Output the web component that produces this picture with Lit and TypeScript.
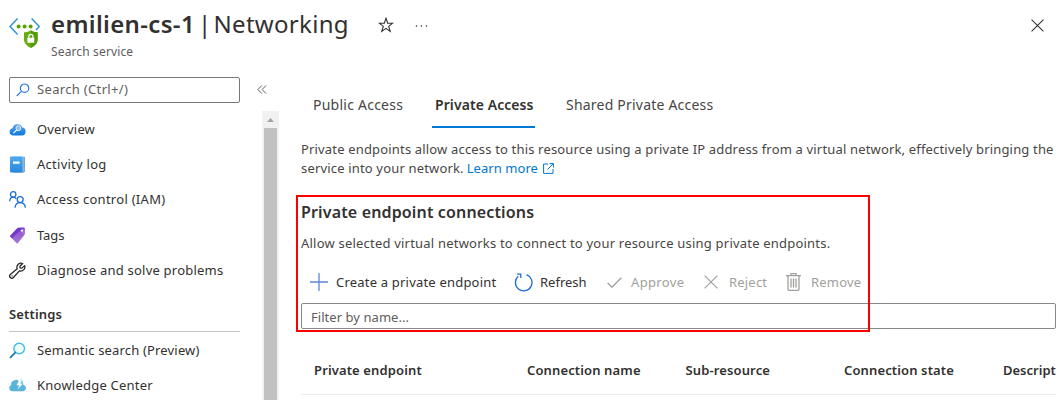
import { LitElement, html, css, svg, TemplateResult } from "lit";
import { customElement } from "lit/decorators.js";

const icon = (w: number, h: number, vb: string, body: unknown) =>
  html`<svg width=${w} height=${h} viewBox=${vb} fill="none">${body}</svg>`;

const service = icon(31, 31, "0 0 31 31", svg`
  <path d="M8.600 .6 1 8.500l7.600 7.900" stroke="#2f94d3" stroke-width="1.500"/>
  <path d="m22.600 .6 7.700 7.900-3.300 3.400" stroke="#2f94d3" stroke-width="1.500"/>
  <circle cx="9.600" cy="8.500" r="2" fill="#57a300"/><circle cx="15.600" cy="8.500" r="2" fill="#57a300"/><circle cx="21.600" cy="8.500" r="2" fill="#57a300"/>
  <path d="M21.800 12.200c2 1.600 4.200 2 6.800 2v7.300c0 4.500-3.800 6.900-6.800 8.500-3-1.600-6.800-4-6.800-8.500v-7.300c2.600 0 4.800-.4 6.800-2Z" fill="#66ad14"/>
  <path d="M21.800 12.200c2 1.600 4.200 2 6.800 2v7.300c0 4.500-3.800 6.900-6.800 8.500Z" fill="#549b06"/>
  <path d="M19.800 20v-1.500a2.050 2.200 0 0 1 4.100 0v1.500" stroke="#fff" stroke-width="1.200"/>
  <rect x="18.400" y="19.800" width="6.900" height="5" rx=".5" fill="#fff"/>`);

const star = icon(16, 16, "0 0 16 16", svg`<path d="m8 1.300 1.700 4.900h5l-4 3.200 1.500 5L8 11.400l-4.200 3 1.500-5-4-3.200h5Z" stroke="#323130" stroke-width="1.100"/>`);
const dots = icon(14, 4, "0 0 14 4", svg`<g fill="#323130"><circle cx="1.500" cy="2" r=".8"/><circle cx="6.500" cy="2" r=".8"/><circle cx="11.500" cy="2" r=".8"/></g>`);
const cross = (s: number, c: string) => icon(s, s, "0 0 14 14", svg`<path d="m.6.6 12.800 12.800M13.400.6.6 13.400" stroke=${c} stroke-width="1.150"/>`);
const magnifier = icon(14, 14, "0 0 14 14", svg`<g stroke="#2b7cd3" stroke-width="1.200"><circle cx="8.600" cy="5.200" r="4.200"/><path d="M5.600 8.200.8 13"/></g>`);
const chevrons = icon(10, 9, "0 0 10 9", svg`<path d="M4.800.5.9 4.500l3.900 4M9 .5 5.100 4.500l3.900 4" stroke="#605e5c"/>`);

const overview = icon(17, 17, "0 0 17 17", svg`
  <defs><linearGradient id="a" x2="0" y2="1"><stop stop-color="#55a4ee"/><stop offset="1" stop-color="#0f78d8"/></linearGradient></defs>
  <path d="M4 14.500A3.700 3.700 0 0 1 3.500 7.200 5.200 5.200 0 0 1 13.400 6.600 4 4 0 0 1 13 14.500Z" fill="url(#a)"/>
  <circle cx="9.400" cy="7.200" r="2.400" fill="#83b9f9" stroke="#e8f2fd" stroke-width="1"/><path d="m7.700 9-3 2.900" stroke="#e8f2fd" stroke-width="1.300" stroke-linecap="round"/>`);
const log = icon(17, 17, "0 0 17 17", svg`
  <defs><linearGradient id="b" x2="0" y2="1"><stop stop-color="#50aaf0"/><stop offset="1" stop-color="#2688dd"/></linearGradient></defs>
  <rect x="2.500" y=".5" width="13" height="15" rx=".8" fill="#a5c9e8"/><path d="M15.200 1v15M4 16h11" stroke="#4a7fae" stroke-width=".9"/>
  <rect x="1" y=".5" width="12.600" height="16" rx=".8" fill="url(#b)"/><rect x="4" y="5.400" width="6.600" height="2.400" rx=".4" fill="#fff"/>`);
const people = icon(17, 17, "0 0 17 17", svg`<g stroke="#1a6fd8" stroke-width="1.300">
  <circle cx="4.200" cy="3.400" r="2.700"/><path d="M.6 10.400c.2-2.600 1.500-4.200 3.600-4.200 1.300 0 2.400.6 3 1.600"/>
  <circle cx="11.200" cy="8.600" r="3"/><path d="M6 16.800c.3-3.200 2.200-5.100 5.200-5.100s4.900 1.900 5.200 5.100"/></g>`);
const tag = icon(17, 17, "0 0 17 17", svg`
  <defs><linearGradient id="c" x2="0" y2="1"><stop stop-color="#8a49d0"/><stop offset="1" stop-color="#a97ad8"/></linearGradient></defs>
  <path d="M9.500.7 14.800.6q1 0 1.100 1l-.1 5.200q0 .6-.5 1.100L8.800 16.200q-.6.600-1.200 0L1.400 9.800q-.5-.7.100-1.300L8.300 1.300Q8.800.7 9.500.7Z" fill="url(#c)"/>
  <path d="M9.500.7h5L2.800 11.200 1.400 9.800q-.5-.7.100-1.300L8.300 1.300Q8.800.7 9.500.7Z" fill="#7439c8"/>
  <circle cx="13" cy="3.600" r="1.200" fill="#fff"/><path d="m13.600 3.800.5 2.600" stroke="#d7bff0" stroke-width=".7"/>`);
const wrench = icon(17, 17, "0 0 17 17", svg`<path d="M13.700 1.500A4.100 4.100 0 0 0 8.200 6.700L1.300 12.500A2.100 2.100 0 0 0 4.400 15.500L10.400 8.900A4.200 4.200 0 0 0 15.700 3.600L12.900 6.100 11.100 5.900 10.900 4.200Z" stroke="#262626" stroke-width="1.250" stroke-linejoin="round"/><circle cx="3.100" cy="13.900" r=".6" fill="#262626"/>`);
const semantic = icon(17, 17, "0 0 17 17", svg`
  <circle cx="10.200" cy="6.600" r="5.300" stroke="#38bfe2" stroke-width="1.400" fill="#effbfe"/><path d="m6.200 10.600-4.700 4.700" stroke="#1d7fb0" stroke-width="1.900" stroke-linecap="round"/>`);
const knowledge = icon(17, 17, "0 0 17 17", svg`
  <path d="M3.300 14.200A3.200 3.200 0 0 1 2.300 8 3.800 3.800 0 0 1 5.200 3.400 4.200 4.200 0 0 1 9.700 3.800L7.600 8.300h2.600L8.500 12.500l5.400-5.900h-2.400l1.700-3.100L14.500 7.900a3.200 3.200 0 0 1-.7 6.300Z" fill="#59b4d9"/><path d="m12.400 2.600-1 .3 1.700.4-1.500 3h2.600L9.500 12" stroke="#8fd0ea" stroke-width=".6"/>`);
const external = icon(11, 11, "0 0 11 11", svg`<path d="M5 1H.6v9.400H10V6M6.500.6h3.900v3.900M10.300.7 4.600 6.400" stroke="#0078d4"/>`);
const plus = icon(18, 18, "0 0 18 18", svg`<path d="M9 0v18M0 9h18" stroke="#5c86dc" stroke-width="1.300"/>`);
const refresh = icon(19, 19, "0 0 19 19", svg`<path d="M12.500 1.700A8.300 8.300 0 1 1 4.200 3.300" stroke="#1f6cd0" stroke-width="1.300"/><path d="M3.200 1.200h3.600V5" stroke="#1f6cd0" stroke-width="1.300"/>`);
const check = icon(15, 11, "0 0 15 11", svg`<path d="m.6 6 4.300 4.200L14.300.8" stroke="#a19f9d" stroke-width="1.300"/>`);
const bin = icon(15, 18, "0 0 15 18", svg`<g stroke="#a19f9d" stroke-width="1.300"><path d="M0 2.700h15M5 2.500V.7h5v1.800M2 3v13.300q0 1 1 1h9q1 0 1-1V3"/><path d="M5 5.500v9M7.500 5.500v9M10 5.500v9"/></g>`);

interface Item { icon: TemplateResult; label: string; track: number }
const general: Item[] = [
  { icon: overview, label: "Overview", track: 0.16 },
  { icon: log, label: "Activity log", track: 0.26 },
  { icon: people, label: "Access control (IAM)", track: 0.28 },
  { icon: tag, label: "Tags", track: -0.1 },
  { icon: wrench, label: "Diagnose and solve problems", track: 0.22 },
];
const settings: Item[] = [
  { icon: semantic, label: "Semantic search (Preview)", track: 0.17 },
  { icon: knowledge, label: "Knowledge Center", track: 0.23 },
];

@customElement("side-nav")
export class SideNav extends LitElement {
  static styles = css`
    :host { display: flex; width: 279px; height: 323px; }
    svg { display: block; flex: none; }
    .main { width: 240px; padding-left: 9px; box-sizing: border-box; }
    .search { display: flex; align-items: center; gap: 7px; height: 26px; box-sizing: border-box; border: 1px solid #7a7876; border-radius: 2px; padding-left: 6px; color: #605e5c; letter-spacing: .33px; }
    .search span { padding-bottom: 1px; }
    .items { padding-top: 9px; }
    .item { display: flex; align-items: center; gap: 11px; height: 35.200px; white-space: nowrap; }
    .group { font-weight: 600; letter-spacing: .15px; height: 44px; line-height: 53px; border-bottom: 1px solid #c8c6c4; box-sizing: border-box; }
    .sub { padding-top: 1px; }
    .side { margin-left: auto; width: 17px; display: flex; flex-direction: column; }
    .fold { height: 34px; padding-top: 8px; box-sizing: border-box; margin-left: -5px; }
    .bar { flex: 1; background: #f1f1f1; display: flex; flex-direction: column; align-items: center; }
    .up { height: 17px; display: flex; align-items: center; }
    .thumb { flex: 1; width: 13px; background: #c1c1c1; }
  `;
  private row(i: Item) {
    return html`<div class="item">${i.icon}<span style="letter-spacing:${i.track}px">${i.label}</span></div>`;
  }
  render() {
    return html`
      <div class="main">
        <div class="search">${magnifier}<span>Search (Ctrl+/)</span></div>
        <div class="items">${general.map((i) => this.row(i))}</div>
        <div class="group">Settings</div>
        <div class="sub">${settings.map((i) => this.row(i))}</div>
      </div>
      <div class="side">
        <div class="fold">${chevrons}</div>
        <div class="bar"><div class="up">${icon(7, 4, "0 0 7 4", svg`<path d="M3.500 0 7 4H0Z" fill="#a3a3a3"/>`)}</div><div class="thumb"></div></div>
      </div>`;
  }
}

@customElement("app-root")
export class AppRoot extends LitElement {
  static styles = css`
    :host { display: block; position: relative; width: 1064px; height: 400px; overflow: hidden; background: #fff; color: #323130; font: 13px/19px "Noto Sans", "Open Sans", sans-serif; white-space: nowrap; }
    svg { display: block; flex: none; }
    header { display: flex; height: 77px; padding: 0 20px 0 9px; box-sizing: border-box; }
    .logo { padding-top: 18px; width: 42px; }
    .title { display: flex; align-items: center; height: 32px; padding-top: 8px; font-size: 24px; line-height: 32px; }
    .title b { font-weight: 600; letter-spacing: .35px; width: 147px; }
    .title .sep { width: 15.500px; }
    .title .page { letter-spacing: .3px; width: 164.500px; }
    .title .star { width: 37px; padding-top: 2px; }
    .title .more { padding-top: 3px; }
    .caption { font-size: 12px; line-height: 18px; padding-top: 3px; color: #605e5c; letter-spacing: .14px; }
    .close { margin-left: auto; padding-top: 19px; }
    .body { display: flex; }
    main { width: 777px; padding: 10px 0 0 22px; box-sizing: border-box; margin-right: 8px; overflow: hidden; }
    .tabs { display: flex; font-size: 14px; height: 41px; }
    .tab { line-height: 36px; box-sizing: border-box; height: 41px; letter-spacing: .24px; color: #484644; }
    .t1 { width: 131px; padding-left: 12px; }
    .t2 { width: 103px; padding-left: 3px; font-weight: 600; letter-spacing: .08px; border-bottom: 2px solid #0078d4; color: #323130; margin-right: 31px; }
    .t3 { letter-spacing: .21px; }
    .intro { padding-top: 12px; letter-spacing: .168px; color: #484644; }
    .intro div { display: flex; align-items: center; }
    .intro a { color: #0078d4; letter-spacing: .05px; margin: 0 5px 0 3px; }
    h2 { margin: 22px 0 0; font-size: 16px; line-height: 24px; font-weight: 600; letter-spacing: .15px; }
    .note { padding-top: 10px; letter-spacing: .208px; color: #484644; }
    .tools { display: flex; align-items: center; height: 49px; padding: 9px 0 0 9px; margin-bottom: 1px; box-sizing: border-box; line-height: 40px; }
    .tool { display: flex; align-items: center; height: 42px; box-sizing: border-box; }
    .off { color: #a19f9d; }
    .c1 { width: 204px; gap: 8px; letter-spacing: .2px; }
    .c2 { width: 93px; gap: 7px; }
    .c3 { width: 97px; gap: 9px; letter-spacing: .35px; }
    .c4 { width: 82px; gap: 11px; letter-spacing: .2px; }
    .c5 { gap: 10px; letter-spacing: .2px; }
    .filter { height: 26px; box-sizing: border-box; border: 1px solid #8a8886; border-radius: 2px; padding-left: 9px; line-height: 27px; color: #605e5c; letter-spacing: .05px; }
    .head { display: grid; grid-template-columns: 213px 158.500px 158.500px 159px 53px; padding-left: 13px; height: 66px; line-height: 83px; box-sizing: border-box; border-bottom: 1px solid #edebe9; font-weight: 600; letter-spacing: .13px; }
    .head .last { letter-spacing: 0; }
    .mark { position: absolute; left: 296px; top: 195px; width: 574px; height: 137px; box-sizing: border-box; border: 2px solid #f00; }
  `;
  render() {
    return html`
      <header>
        <div class="logo">${service}</div>
        <div>
          <div class="title"><b>emilien-cs-1</b><span class="sep">|</span><span class="page">Networking</span><span class="star">${star}</span><span class="more">${dots}</span></div>
          <div class="caption">Search service</div>
        </div>
        <div class="close">${cross(13, "#323130")}</div>
      </header>
      <div class="body">
        <side-nav></side-nav>
        <main>
          <div class="tabs">
            <div class="tab t1">Public Access</div><div class="tab t2">Private Access</div><div class="tab t3">Shared Private Access</div>
          </div>
          <div class="intro">
            <div>Private endpoints allow access to this resource using a private IP address from a virtual network, effectively bringing the</div>
            <div>service into your network.<a>Learn more</a>${external}</div>
          </div>
          <h2>Private endpoint connections</h2>
          <div class="note">Allow selected virtual networks to connect to your resource using private endpoints.</div>
          <div class="tools">
            <div class="tool c1">${plus}<span>Create a private endpoint</span></div>
            <div class="tool c2">${refresh}<span>Refresh</span></div>
            <div class="tool c3 off">${check}<span>Approve</span></div>
            <div class="tool c4 off">${cross(14, "#a19f9d")}<span>Reject</span></div>
            <div class="tool c5 off">${bin}<span>Remove</span></div>
          </div>
          <div class="filter">Filter by name...</div>
          <div class="head">
            <span>Private endpoint</span><span>Connection name</span><span>Sub-resource</span><span>Connection state</span><span class="last">Descript</span>
          </div>
        </main>
      </div>
      <div class="mark"></div>`;
  }
}
